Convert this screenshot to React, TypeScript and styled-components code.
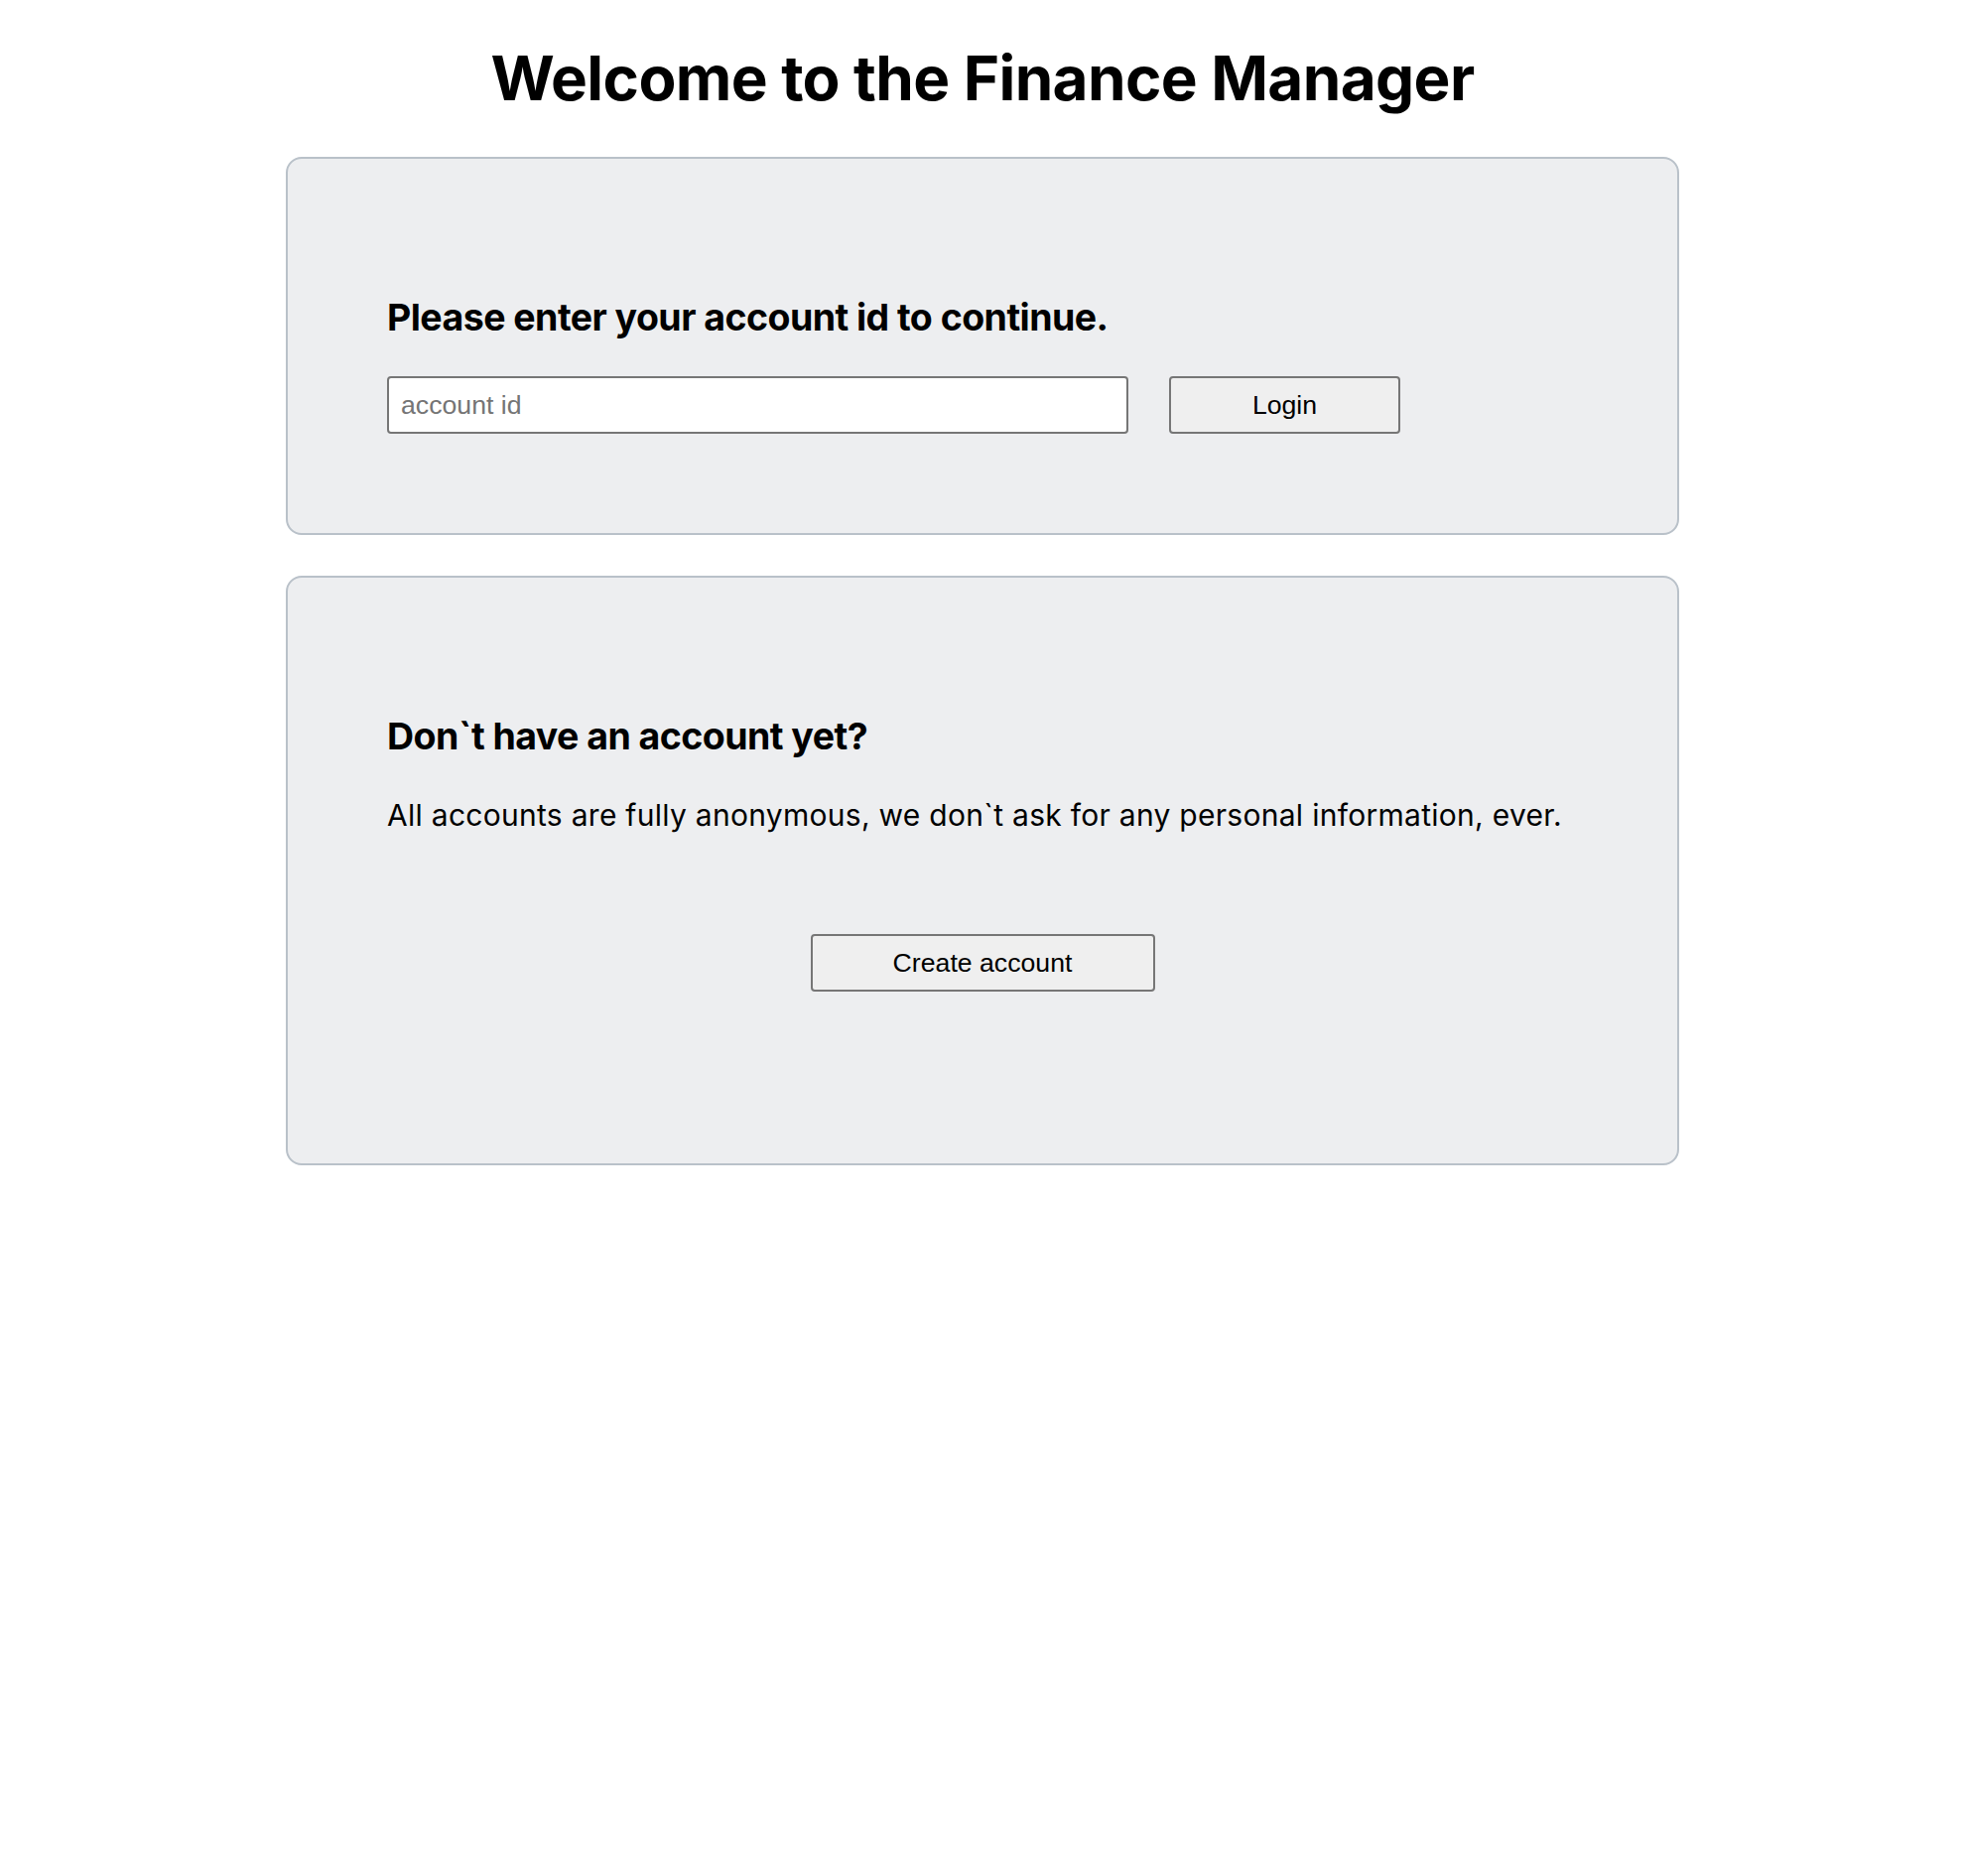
import React from "react";
import styled, { createGlobalStyle } from "styled-components";

const GlobalStyle = createGlobalStyle`
  html, body {
    margin: 0;
    padding: 0;
    background: #ffffff;
  }
  body {
    font-family: Inter, "Noto Sans", sans-serif;
    color: #000000;
  }
`;

const Page = styled.main`
  display: flex;
  flex-direction: column;
  align-items: center;
  padding-bottom: 40px;
`;

const Title = styled.h1`
  margin: 41px 0 42px 4px;
  font-family: Inter, sans-serif;
  font-size: 62px;
  line-height: 1.21;
  font-weight: 700;
  letter-spacing: -0.62px;
  text-align: center;
`;

const Card = styled.section`
  box-sizing: border-box;
  width: 1404px;
  margin-left: 4px;
  padding: 100px;
  background: #edeef0;
  border: 2px solid #b9c1c9;
  border-radius: 16px;
  & + & {
    margin-top: 41px;
  }
`;

const Heading = styled.h3`
  margin: 37px 0;
  font-family: Inter, sans-serif;
  font-size: 37.5px;
  line-height: 1.21;
  font-weight: 700;
  letter-spacing: -0.55px;
`;

const Text = styled.p`
  margin: 0;
  padding-top: 1px;
  font-family: Inter, sans-serif;
  font-size: 30px;
  line-height: 1.21;
  font-weight: 400;
  letter-spacing: 0.28px;
`;

const Row = styled.div`
  display: flex;
  align-items: center;
  gap: 41px;
`;

const Input = styled.input`
  box-sizing: border-box;
  width: 747px;
  height: 58px;
  padding: 0 12px;
  background: #ffffff;
  border: 2px solid #767676;
  border-radius: 4px;
  font-family: "Liberation Sans", Arial, sans-serif;
  font-size: 26.67px;
  color: #000;
  outline: none;
  &::placeholder {
    color: #757575;
  }
`;

const Button = styled.button<{ $width: number }>`
  box-sizing: border-box;
  width: ${(p) => p.$width}px;
  height: 58px;
  padding: 0;
  background: #efefef;
  border: 2px solid #767676;
  border-radius: 4px;
  font-family: "Liberation Sans", Arial, sans-serif;
  font-size: 26.67px;
  color: #000;
  cursor: pointer;
`;

const Actions = styled.div`
  display: flex;
  justify-content: center;
  padding: 102px 0 73px;
`;

export default function App() {
  return (
    <>
      <GlobalStyle />
      <Page>
        <Title>Welcome to the Finance Manager</Title>
        <Card>
          <Heading>Please enter your account id to continue.</Heading>
          <Row>
            <Input placeholder="account id" />
            <Button $width={233}>Login</Button>
          </Row>
        </Card>
        <Card>
          <Heading>Don`t have an account yet?</Heading>
          <Text>
            All accounts are fully anonymous, we don`t ask for any personal
            information, ever.
          </Text>
          <Actions>
            <Button $width={347}>Create account</Button>
          </Actions>
        </Card>
      </Page>
    </>
  );
}
